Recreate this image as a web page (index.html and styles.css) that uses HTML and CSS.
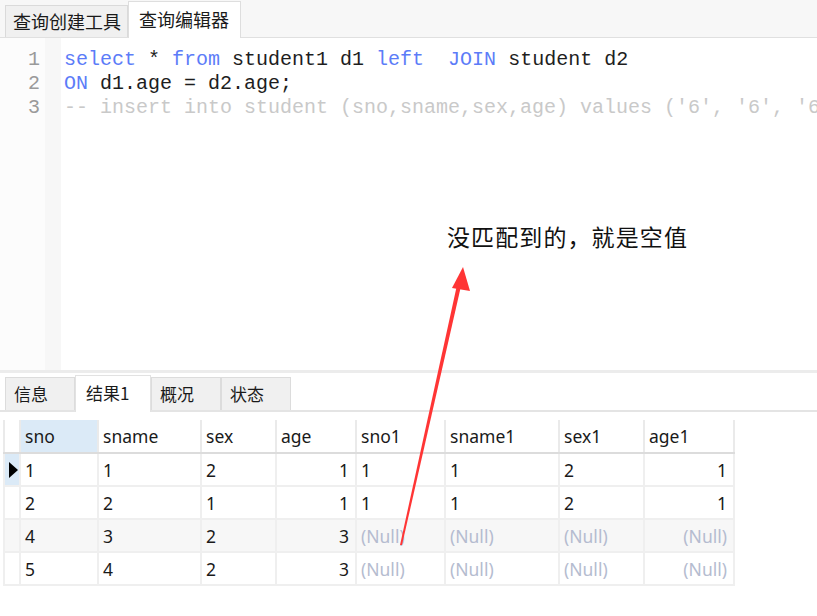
FILE: index.html
```html
<!DOCTYPE html>
<html>
<head>
<meta charset="utf-8">
<link rel="stylesheet" href="styles.css">
</head>
<body>
<div class="app">
  <div class="top-tabs">
    <div class="tab">查询创建工具</div>
    <div class="tab active">查询编辑器</div>
  </div>
  <div class="editor">
    <div class="gutter">
      <div class="ln">1</div>
      <div class="ln">2</div>
      <div class="ln">3</div>
    </div>
    <div class="fold"></div>
    <div class="code">
      <div class="line"><span class="kw">select</span> * <span class="kw">from</span> student1 d1 <span class="kw">left</span>  <span class="kw">JOIN</span> student d2</div>
      <div class="line"><span class="kw">ON</span> d1.age = d2.age;</div>
      <div class="line cm">-- insert into student (sno,sname,sex,age) values ('6', '6', '6</div>
    </div>
  </div>
  <div class="splitter"></div>
  <div class="result-tabs">
    <div class="rtab">信息</div>
    <div class="rtab active">结果1</div>
    <div class="rtab">概况</div>
    <div class="rtab">状态</div>
  </div>
  <div class="grid-wrap">
    <table class="grid">
      <colgroup>
        <col class="c-rh"><col class="c-sno"><col class="c-sname"><col class="c-sex"><col class="c-age"><col class="c-sno1"><col class="c-sname1"><col class="c-sex1"><col class="c-age1">
      </colgroup>
      <thead>
        <tr><th class="rh"></th><th class="sel">sno</th><th>sname</th><th>sex</th><th>age</th><th>sno1</th><th>sname1</th><th>sex1</th><th>age1</th></tr>
      </thead>
      <tbody>
        <tr><td class="rh cur"><span class="tri"></span></td><td>1</td><td>1</td><td>2</td><td class="r">1</td><td>1</td><td>1</td><td>2</td><td class="r">1</td></tr>
        <tr><td class="rh"></td><td>2</td><td>2</td><td>1</td><td class="r">1</td><td>1</td><td>1</td><td>2</td><td class="r">1</td></tr>
        <tr class="alt"><td class="rh"></td><td>4</td><td>3</td><td>2</td><td class="r">3</td><td class="null">(Null)</td><td class="null">(Null)</td><td class="null">(Null)</td><td class="null r">(Null)</td></tr>
        <tr><td class="rh"></td><td>5</td><td>4</td><td>2</td><td class="r">3</td><td class="null">(Null)</td><td class="null">(Null)</td><td class="null">(Null)</td><td class="null r">(Null)</td></tr>
      </tbody>
    </table>
  </div>
  <div class="note">没匹配到的，就是空值</div>
  <svg class="arrow" width="817" height="616" viewBox="0 0 817 616">
    <polygon points="400,545 402,545 461,286 457,285" fill="#ff3535"/>
    <polygon points="463,267 470,291 452,288" fill="#ff3535"/>
  </svg>
</div>
</body>
</html>
```

FILE: styles.css
```css
* { box-sizing: border-box; }
html, body { margin: 0; padding: 0; background: #fff; }
.app {
  position: relative;
  width: 817px;
  height: 616px;
  overflow: hidden;
  font-family: "Noto Sans CJK SC", "Noto Sans", sans-serif;
  color: #1a1a1a;
}
.top-tabs {
  height: 38px;
  background: #f7f7f7;
  border-bottom: 1px solid #e0e0e0;
  display: flex;
  align-items: flex-end;
  padding-left: 5px;
}
.tab {
  height: 32px;
  padding: 0 6px 0 7px;
  background: #f0f0f0;
  border: 1px solid #dadada;
  border-bottom: none;
  font-size: 18px;
  line-height: 30px;
}
.tab.active {
  height: 37px;
  background: #fff;
  margin-bottom: -1px;
  padding: 0 11px 0 10px;
  line-height: 34px;
  border-color: #dedede;
}
.editor {
  height: 332px;
  display: flex;
  background: #fff;
  overflow: hidden;
}
.gutter {
  flex: 0 0 45px;
  background: #fcfcfc;
  padding-top: 10px;
  text-align: right;
  padding-right: 5px;
}
.fold {
  flex: 0 0 16px;
  background: #f7f7f7;
}
.ln, .line {
  height: 24px;
  line-height: 24px;
  font-family: "Liberation Mono", monospace;
  font-size: 20px;
  white-space: pre;
}
.ln { color: #9a9a9a; }
.code { flex: 1 1 auto; min-width: 0; padding-top: 10px; padding-left: 3px; color: #1e1e1e; }
.kw { color: #5c7cf8; }
.cm { color: #c9c9c9; }
.splitter {
  height: 5px;
  background: #fff;
  border-top: 3px solid #ececec;
}
.result-tabs {
  height: 37px;
  display: flex;
  align-items: flex-end;
  padding-left: 5px;
  border-bottom: 2px solid #e4e4e4;
}
.rtab {
  width: 70px;
  height: 33px;
  background: #f0f0f0;
  border: 1px solid #dcdcdc;
  border-bottom: none;
  font-size: 17px;
  line-height: 32px;
  padding-left: 8px;
}
.rtab.active {
  width: 76px;
  height: 37px;
  background: #fff;
  margin-bottom: -2px;
  padding-left: 10px;
  line-height: 34px;
  border-color: #e2e2e2;
}
.grid-wrap { padding: 8px 0 0 3px; }
.grid {
  border-collapse: collapse;
  table-layout: fixed;
  width: 730px;
  font-family: "Noto Sans", "Noto Sans CJK SC", sans-serif;
  font-size: 17.5px;
}
.c-rh { width: 16px; }
.c-sno { width: 78px; }
.c-sname { width: 103px; }
.c-sex { width: 75px; }
.c-age { width: 80px; }
.c-sno1 { width: 89px; }
.c-sname1 { width: 114px; }
.c-sex1 { width: 85px; }
.c-age1 { width: 90px; }
.grid th {
  height: 33px;
  font-weight: normal;
  text-align: left;
  padding: 0 4px;
  border-left: 2px solid #eaeaea;
  border-right: 2px solid #eaeaea;
  border-bottom: 2px solid #dcdcdc;
  background: #fff;
  color: #1a1a1a;
}
.grid th.sel { background: #dbeaf7; }
.grid td {
  height: 33px;
  padding: 0 4px;
  border: 2px solid #efefef;
  color: #1a1a1a;
  white-space: nowrap;
}
.grid td.r { text-align: right; padding-right: 6px; }
.grid .rh { padding: 0; }
.grid td.cur { background: #dbeaf7; }
.grid tr.alt td { background: #f7f7f7; }
.grid td.null { color: #b5bcd0; }
.tri {
  display: block;
  width: 0;
  height: 0;
  margin-left: 4px;
  border-top: 8px solid transparent;
  border-bottom: 8px solid transparent;
  border-left: 9px solid #000;
}
.note {
  position: absolute;
  left: 447px;
  top: 221px;
  font-size: 23px;
  line-height: 30px;
  color: #111;
  letter-spacing: 1.1px;
}
.arrow {
  position: absolute;
  left: 0;
  top: 0;
  pointer-events: none;
}
```
